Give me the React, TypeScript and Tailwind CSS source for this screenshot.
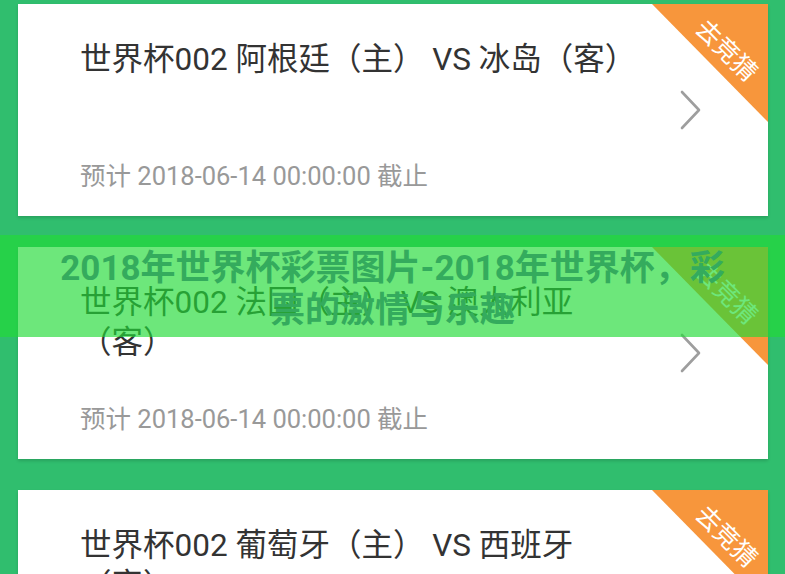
const matches = [
  { home: "阿根廷", away: "冰岛" },
  { home: "法国", away: "澳大利亚" },
  { home: "葡萄牙", away: "西班牙" },
];

function Chevron() {
  return (
    <svg width="22" height="40" viewBox="0 0 22 40" fill="none">
      <path
        d="M2 2 L19 20 L2 38"
        stroke="#9e9e9e"
        strokeWidth="2.6"
        strokeLinecap="round"
        strokeLinejoin="round"
      />
    </svg>
  );
}

function MatchCard({ home, away }: { home: string; away: string }) {
  return (
    <div className="relative flex h-[212px] shrink-0 bg-white shadow-[0_2px_3px_rgba(0,0,0,0.15)]">
      <div className="flex flex-1 flex-col justify-between pl-[62px] pt-[36px] pb-[24px]">
        <p className="w-[566px] text-[31.5px] leading-[40px] text-[#333]">
          世界杯002 {home}（主） VS {away}（客）
        </p>
        <p className="text-[25.5px] leading-[32px] text-[#999]">
          预计 2018-06-14 00:00:00 截止
        </p>
      </div>

      <div className="flex items-center pr-[66px]">
        <Chevron />
      </div>

      {/* corner ribbon */}
      <div className="absolute right-0 top-0 h-[118px] w-[116px] bg-[#f7963c] [clip-path:polygon(0_0,100%_0,100%_100%)]" />
      <span className="absolute right-[1px] top-[32px] flex h-[30px] w-[82px] rotate-45 items-center justify-center text-[25px] leading-[30px] text-white">
        去竞猜
      </span>
    </div>
  );
}

export default function App() {
  return (
    <div className="relative h-[574px] overflow-hidden bg-[#30be6e] font-[Roboto,'Noto_Sans_CJK_SC',sans-serif]">
      <div className="flex flex-col gap-[31px] pl-[18px] pr-[17px] pt-[4px]">
        {matches.map((m) => (
          <MatchCard key={m.home} home={m.home} away={m.away} />
        ))}
      </div>

      <div className="absolute inset-x-0 top-[235px] flex h-[102px] items-center justify-center bg-[rgba(34,218,55,0.66)] pt-[8px]">
        <h1 className="text-center text-[35px] font-bold leading-[42px] text-[#34ab5d]">
          2018年世界杯彩票图片-2018年世界杯，彩
          <br />
          票的激情与乐趣
        </h1>
      </div>
    </div>
  );
}
